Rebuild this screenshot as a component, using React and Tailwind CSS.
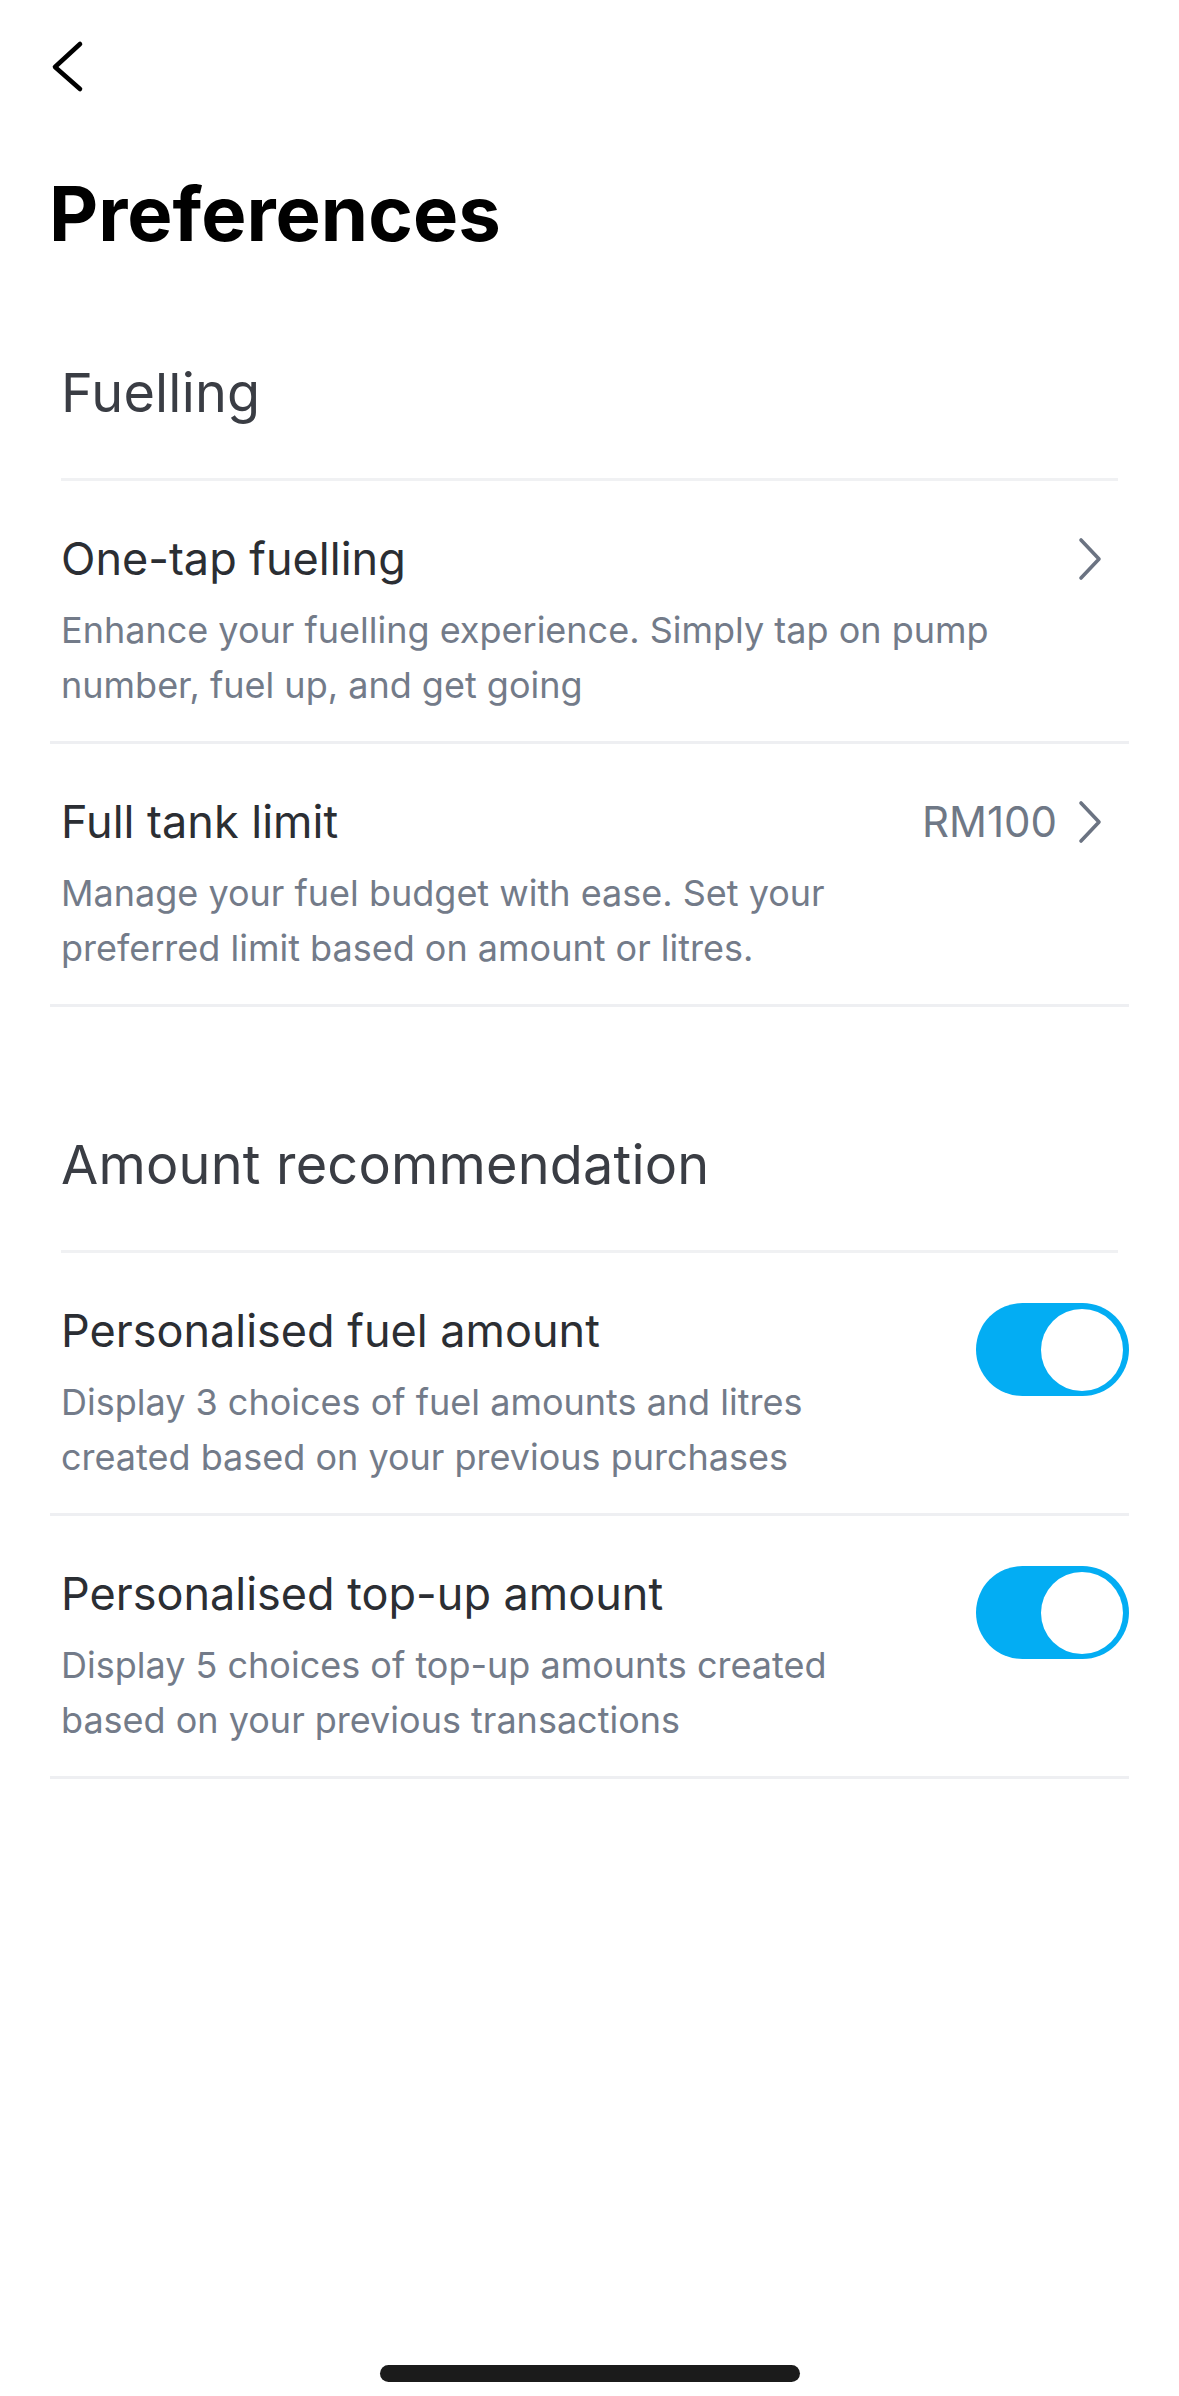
import { useState } from "react";

function ChevronRight() {
  return (
    <svg width="26" height="44" viewBox="0 0 26 44" fill="none" className="shrink-0">
      <path d="M4 3 L22 22 L4 41" stroke="#6b7382" strokeWidth="3.6" strokeLinecap="round" strokeLinejoin="round" />
    </svg>
  );
}

function Toggle({ on, onChange }) {
  return (
    <button
      onClick={() => onChange(!on)}
      className={`relative w-[153px] h-[93px] shrink-0 rounded-full ${on ? "bg-[#03adf3]" : "bg-[#d9dce1]"}`}
    >
      <span
        className={`absolute top-[5.5px] w-[82px] h-[82px] rounded-full bg-white ${on ? "right-[6px]" : "left-[6px]"}`}
      />
    </button>
  );
}

function SectionHeading({ children, className = "" }) {
  return (
    <div className={className}>
      <h2 className="px-[61px] text-[54px] leading-[64px] tracking-[0.2px] text-[#3a3d44] font-normal">{children}</h2>
      <div className="mx-[61px] mt-[53px] h-[3px] bg-[#f0f1f3]" />
    </div>
  );
}

// row with a chevron (and optional value) on the right
function LinkRow({ title, description, value }) {
  return (
    <div className="mx-[50px] pl-[11px] pr-[26px] pt-[50px] pb-[28px] border-b-[3px] border-[#eeeff2] flex items-start gap-[40px]">
      <div className="flex-1 min-w-0">
        <div className="text-[45px] leading-[56px] text-[#2b2e33]">{title}</div>
        <p className="mt-[16px] text-[36px] leading-[55px] text-[#737b89]">{description}</p>
      </div>
      <div className="h-[56px] flex items-center gap-[20px] shrink-0">
        {value && <span className="text-[42px] leading-[56px] text-[#6f7886]">{value}</span>}
        <ChevronRight />
      </div>
    </div>
  );
}

function ToggleRow({ title, description, on, onChange }) {
  return (
    <div className="mx-[50px] pl-[11px] pt-[50px] pb-[28px] border-b-[3px] border-[#eeeff2] flex items-start justify-between">
      <div>
        <div className="text-[45px] leading-[56px] text-[#2b2e33]">{title}</div>
        <p className="mt-[16px] max-w-[800px] text-[36px] leading-[55px] text-[#737b89]">{description}</p>
      </div>
      <Toggle on={on} onChange={onChange} />
    </div>
  );
}

export default function App() {
  const [fuelOn, setFuelOn] = useState(true);
  const [topUpOn, setTopUpOn] = useState(true);

  return (
    <div className="relative w-[1179px] h-[2396px] bg-white font-['Inter',sans-serif] overflow-hidden">
      {/* header */}
      <div className="h-[89px] pt-[40px] pl-[50px]">
        <button>
          <svg width="34" height="54" viewBox="0 0 34 54" fill="none">
            <path d="M30 4 L5 27 L30 49" stroke="#000" strokeWidth="4.6" strokeLinecap="round" strokeLinejoin="round" />
          </svg>
        </button>
      </div>

      <h1 className="mt-[80px] pl-[49px] text-[76px] leading-[88px] font-bold text-black">
        Preferences
      </h1>

      <SectionHeading className="mt-[104px]">Fuelling</SectionHeading>

      <LinkRow
        title="One-tap fuelling"
        description="Enhance your fuelling experience. Simply tap on pump number, fuel up, and get going"
      />
      <LinkRow
        title="Full tank limit"
        value="RM100"
        description="Manage your fuel budget with ease. Set your preferred limit based on amount or litres."
      />

      <SectionHeading className="mt-[126px]">Amount recommendation</SectionHeading>

      <ToggleRow
        title="Personalised fuel amount"
        description="Display 3 choices of fuel amounts and litres created based on your previous purchases"
        on={fuelOn}
        onChange={setFuelOn}
      />
      <ToggleRow
        title="Personalised top-up amount"
        description="Display 5 choices of top-up amounts created based on your previous transactions"
        on={topUpOn}
        onChange={setTopUpOn}
      />

      {/* home indicator */}
      <div className="absolute bottom-[14px] left-1/2 -translate-x-1/2 w-[420px] h-[17px] rounded-full bg-[#1b1b1b]" />
    </div>
  );
}
